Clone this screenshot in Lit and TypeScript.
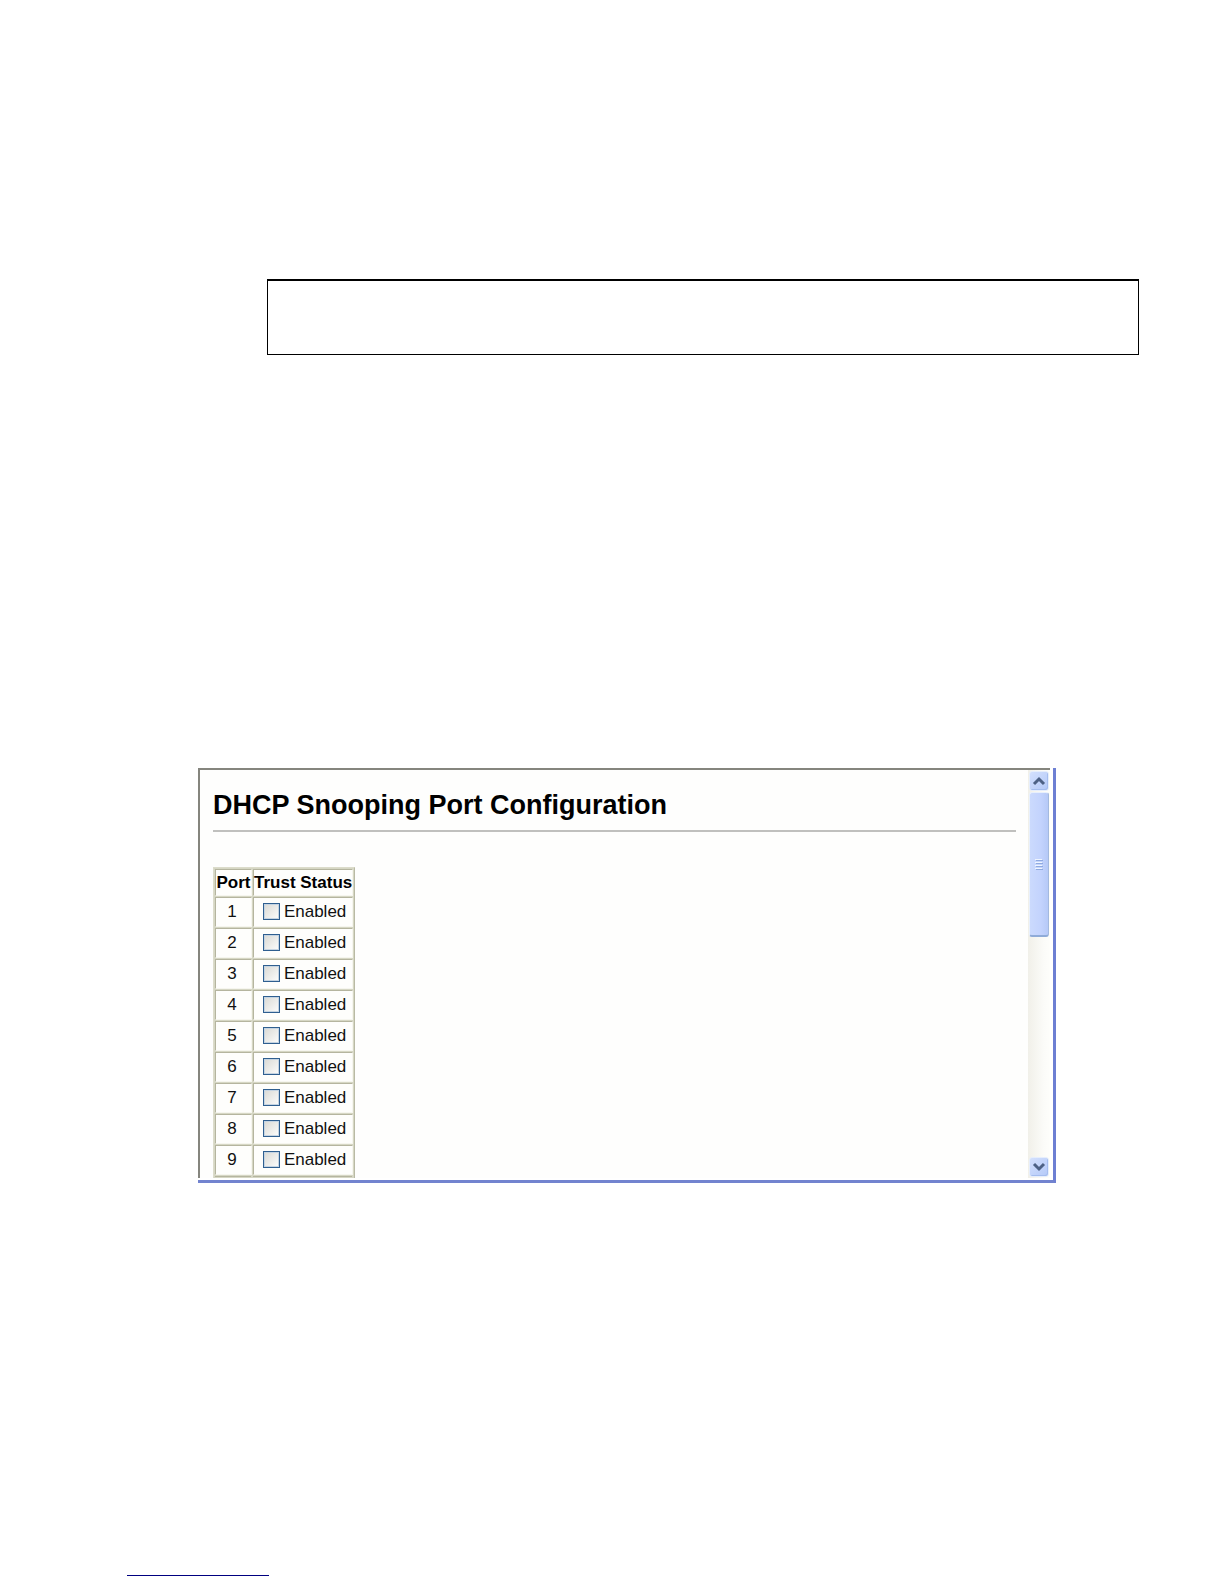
import { LitElement, html, css } from "lit";
import { customElement, property } from "lit/decorators.js";

@customElement("scroll-rail")
class ScrollRail extends LitElement {
  static styles = css`
    :host {
      display: flex;
      flex-direction: column;
      align-items: center;
      box-sizing: border-box;
      width: 22px;
      padding: 1px 0;
      background: linear-gradient(90deg, #f1f0e9, #fbfbf8 70%, #fefefb);
    }
    .step {
      flex: none;
      display: grid;
      place-items: center;
      box-sizing: border-box;
      width: 20px;
      height: 20px;
      padding: 0;
      border: 1px solid #e6eefc;
      border-radius: 3px;
      background: linear-gradient(135deg, #d3e0fd, #b4c9f8);
      box-shadow: inset -1px -1px 0 #a5bdee;
    }
    .thumb {
      flex: none;
      display: grid;
      place-items: center;
      box-sizing: border-box;
      width: 20px;
      height: 145px;
      margin-top: 1px;
      border: 1px solid #e8f0fd;
      border-right-color: #a3b9df;
      border-bottom: 2px solid #8fabd8;
      border-radius: 3px;
      background: linear-gradient(90deg, #cbdafd, #c3d3fd 60%, #b6c9f7);
    }
    .gap {
      flex: 1;
    }
    svg {
      display: block;
    }
  `;

  render() {
    return html`
      <button class="step" aria-label="Scroll up">
        <svg width="14" height="12" viewBox="0 0 14 12">
          <path d="M2 9 L7 4 L12 9" fill="none" stroke="#4d6185" stroke-width="3" />
        </svg>
      </button>
      <div class="thumb">
        <svg width="10" height="12" viewBox="0 0 10 12">
          <path d="M1 1.5H8M1 4.5H8M1 7.5H8M1 10.5H8" stroke="#eef4fe" />
          <path d="M2 2.5H9M2 5.5H9M2 8.5H9M2 11.5H9" stroke="#8faae0" />
        </svg>
      </div>
      <div class="gap"></div>
      <button class="step" aria-label="Scroll down">
        <svg width="14" height="12" viewBox="0 0 14 12">
          <path d="M2 3 L7 8 L12 3" fill="none" stroke="#4d6185" stroke-width="3" />
        </svg>
      </button>
    `;
  }
}

@customElement("port-table")
class PortTable extends LitElement {
  @property({ type: Array }) ports: number[] = [];

  static styles = css`
    table {
      border-collapse: separate;
      border-spacing: 1px;
      border: 1px solid #dcdccb;
      border-right-color: #b9baa4;
      border-bottom: 0;
      background: #d6d7c4;
      font: 17px/20px "Liberation Sans", Arial, sans-serif;
      color: #111;
    }
    th,
    td {
      box-sizing: border-box;
      padding: 0;
      border: 1px solid #f6f6ef;
      border-top-color: #b5b59f;
      border-left-color: #b5b59f;
      background: #fefefc;
      text-align: center;
      white-space: nowrap;
    }
    th {
      height: 27px;
      color: #000;
    }
    td {
      height: 30px;
    }
    .port {
      width: 37px;
    }
    .trust {
      width: 100px;
    }
    .number {
      padding-right: 3px;
    }
    .more {
      height: 1px;
      border-bottom: 0;
    }
    label {
      display: flex;
      align-items: center;
      justify-content: center;
      gap: 4px;
      padding-left: 3px;
    }
    input {
      appearance: none;
      box-sizing: border-box;
      width: 17px;
      height: 17px;
      margin: 0 0 2px;
      border: 1px solid #2f5f90;
      outline: 1px solid #c5d4e2;
      outline-offset: -2px;
      background: linear-gradient(135deg, #d9d9d4, #fdfdfc);
    }
    input:checked {
      background: #3a9a3a;
    }
  `;

  render() {
    return html`
      <table>
        <thead>
          <tr>
            <th class="port">Port</th>
            <th class="trust">Trust Status</th>
          </tr>
        </thead>
        <tbody>
          ${this.ports.map(
            (port) => html`
              <tr>
                <td class="number">${port}</td>
                <td>
                  <label><input type="checkbox" name="trust-${port}" />Enabled</label>
                </td>
              </tr>
            `
          )}
          <tr>
            <td class="more"></td>
            <td class="more"></td>
          </tr>
        </tbody>
      </table>
    `;
  }
}

@customElement("app-root")
class AppRoot extends LitElement {
  static styles = css`
    :host {
      display: block;
      background: #fff;
      font-family: "Liberation Sans", Arial, sans-serif;
    }
    .page {
      display: flex;
      flex-direction: column;
      box-sizing: border-box;
      min-height: 100vh;
      padding-top: 279px;
    }
    .note {
      box-sizing: border-box;
      min-height: 76px;
      margin: 0 85px 413px 267px;
      border: 1px solid #000;
      border-top-width: 2px;
    }
    .window {
      margin: 0 168px 0 198px;
      border-right: 3px solid #6d7fd3;
      border-bottom: 3px solid #7283cf;
    }
    .frame {
      display: flex;
      margin: 0 3px 2px 0;
      border-top: 2px solid #85857e;
      border-left: 2px solid #85857e;
      background: #fefefd;
    }
    .content {
      flex: 1;
      min-width: 0;
      padding: 20px 12px 0 13px;
    }
    h1 {
      margin: 0;
      padding-bottom: 9px;
      border-bottom: 2px solid #c0c0be;
      font-size: 27px;
      line-height: 31px;
      color: #000;
    }
    port-table {
      display: block;
      margin-top: 35px;
    }
    .footer {
      margin-top: auto;
      padding: 0 0 8px 127px;
    }
    .link {
      display: block;
      width: 142px;
      height: 20px;
      border-bottom: 1px solid #000080;
    }
  `;

  private ports = [1, 2, 3, 4, 5, 6, 7, 8, 9];

  render() {
    return html`
      <main class="page">
        <div class="note"></div>
        <section class="window">
          <div class="frame">
            <div class="content">
              <h1>DHCP Snooping Port Configuration</h1>
              <port-table .ports=${this.ports}></port-table>
            </div>
            <scroll-rail></scroll-rail>
          </div>
        </section>
        <footer class="footer"><a class="link" href="#"></a></footer>
      </main>
    `;
  }
}
